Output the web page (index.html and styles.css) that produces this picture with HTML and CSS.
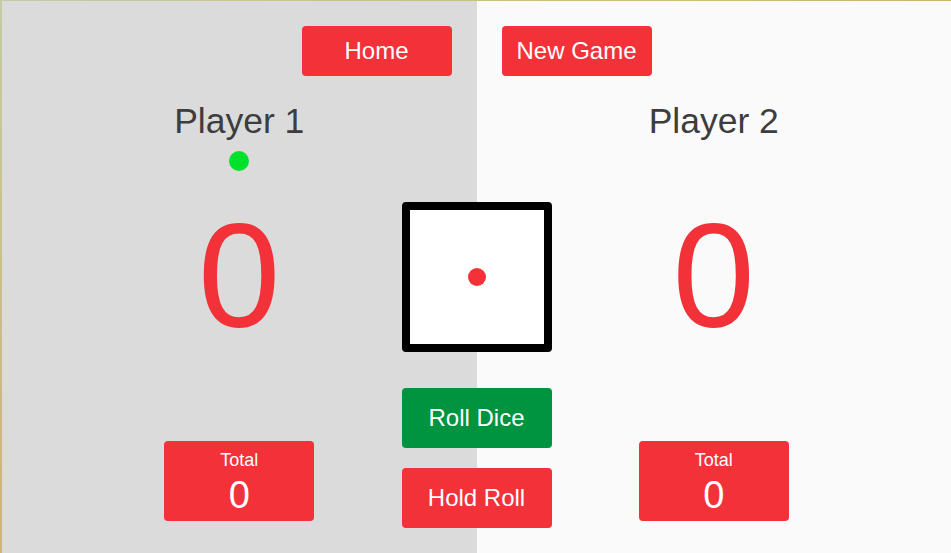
FILE: index.html
```html
<!DOCTYPE html>
<html>
<head>
<meta charset="utf-8">
<title>Pig Game</title>
<link rel="stylesheet" href="styles.css">
</head>
<body>
<div class="game">
  <section class="panel panel-active">
    <h2 class="name">Player 1</h2>
    <span class="turn-dot"></span>
    <div class="score">0</div>
    <div class="total">
      <span class="total-label">Total</span>
      <span class="total-value">0</span>
    </div>
  </section>
  <section class="panel panel-idle">
    <h2 class="name">Player 2</h2>
    <span class="turn-dot hidden"></span>
    <div class="score">0</div>
    <div class="total">
      <span class="total-label">Total</span>
      <span class="total-value">0</span>
    </div>
  </section>
  <div class="controls">
    <nav class="nav">
      <button class="btn btn-red btn-nav">Home</button>
      <button class="btn btn-red btn-nav">New Game</button>
    </nav>
    <div class="dice"><span class="pip"></span></div>
    <button class="btn btn-green btn-action btn-roll">Roll Dice</button>
    <button class="btn btn-red btn-action btn-hold">Hold Roll</button>
  </div>
</div>
</body>
</html>
```
FILE: styles.css
```css
html, body {
  margin: 0;
  padding: 0;
}
body {
  height: 553px;
  overflow: hidden;
  background: linear-gradient(to bottom right, #c4cba4 0%, #cdb86e 45%, #d8b257 100%);
  font-family: "Liberation Sans", Arial, sans-serif;
}
.game {
  position: relative;
  margin: 1px 0 0 2px;
  height: 552px;
  display: grid;
  grid-template-columns: 1fr 1fr;
}
.panel {
  display: flex;
  flex-direction: column;
  align-items: center;
}
.panel-active { background: #dbdbdb; }
.panel-idle { background: #fafafa; }
.name {
  margin: 102.5px 0 0;
  height: 35.5px;
  font-size: 35.5px;
  line-height: 1;
  font-weight: normal;
  color: #3d3d3d;
}
.turn-dot {
  margin-top: 12px;
  width: 20px;
  height: 20px;
  border-radius: 50%;
  background: #00e12b;
}
.turn-dot.hidden { visibility: hidden; }
.score {
  margin-top: 31px;
  font-size: 148px;
  line-height: 1;
  color: #f23139;
}
.total {
  margin-top: 91px;
  width: 150px;
  height: 80px;
  box-sizing: border-box;
  padding-top: 10px;
  border-radius: 4px;
  background: #f23139;
  color: #fff;
  display: flex;
  flex-direction: column;
  align-items: center;
}
.total-label {
  font-size: 18px;
  line-height: 1;
}
.total-value {
  margin-top: 7px;
  font-size: 38px;
  line-height: 1;
}
.controls {
  position: absolute;
  top: 0;
  left: 50%;
  transform: translateX(-50%);
  display: flex;
  flex-direction: column;
  align-items: center;
}
.nav {
  margin-top: 25px;
  display: flex;
  gap: 50px;
}
.btn {
  border: none;
  border-radius: 4px;
  color: #fff;
  font-family: "Liberation Sans", Arial, sans-serif;
  font-size: 24px;
  line-height: 1;
  padding: 0;
  display: flex;
  align-items: center;
  justify-content: center;
}
.btn-red { background: #f23139; }
.btn-green { background: #009340; }
.btn-nav {
  width: 150px;
  height: 50px;
}
.btn-action {
  width: 150px;
  height: 60px;
}
.dice {
  margin-top: 126px;
  width: 150px;
  height: 150px;
  box-sizing: border-box;
  border: 8px solid #000;
  border-radius: 4px;
  background: #fff;
  display: flex;
  align-items: center;
  justify-content: center;
}
.pip {
  width: 18px;
  height: 18px;
  border-radius: 50%;
  background: #f23139;
}
.btn-roll { margin-top: 36px; }
.btn-hold { margin-top: 20px; }
```
